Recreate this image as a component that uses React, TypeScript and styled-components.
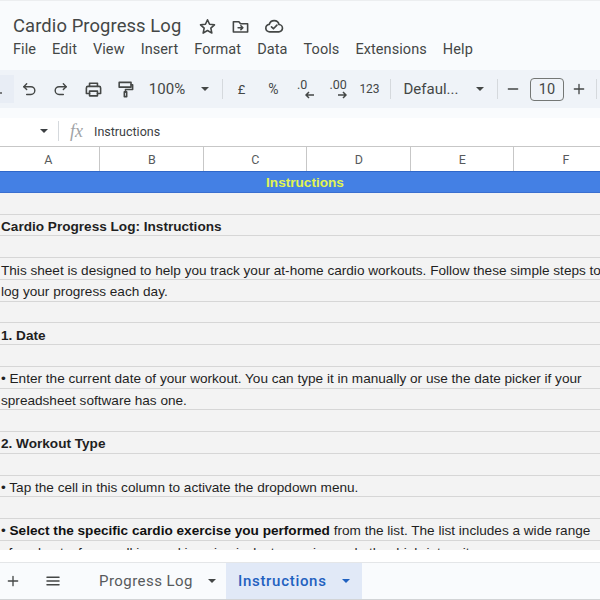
import { createGlobalStyle, styled } from "styled-components";
import type { ReactNode } from "react";

const Global = createGlobalStyle`
  html, body { margin: 0; padding: 0; background: #fff; }
  #root { width: 600px; height: 600px; overflow: hidden; }
`;

const Page = styled.div`
  width: 600px;
  height: 600px;
  display: flex;
  flex-direction: column;
  overflow: hidden;
  background: #f9fbfd;
  color: #444746;
  font-family: "Roboto", "Open Sans", sans-serif;
`;

const Header = styled.header`
  height: 70px;
  flex: none;
  box-sizing: border-box;
  border-top: 1px solid #eceef0;
  padding-left: 13px;
`;

const TitleRow = styled.div`
  height: 38px;
  display: flex;
  align-items: flex-end;
`;

const Title = styled.div`
  font-size: 18.4px;
  line-height: 26px;
  width: 185px;
  white-space: nowrap;
  letter-spacing: 0.1px;
`;

const TitleIcons = styled.div`
  display: flex;
  align-items: center;
  gap: 14px;
  height: 26px;
`;

const Menu = styled.nav`
  display: flex;
  gap: 16px;
  height: 20px;
  align-items: center;
  font-size: 14.5px;
  letter-spacing: 0.08px;
`;

const Toolbar = styled.div`
  height: 38px;
  margin-bottom: 10px;
  flex: none;
  background: #eff3f8;
  display: flex;
  align-items: center;
  position: relative;
`;

const SearchStub = styled.div`
  width: 14px;
  height: 28px;
  background: #e8edf5;
  flex: none;
  position: relative;
  &::after {
    content: "";
    position: absolute;
    left: 0;
    top: 17px;
    width: 2px;
    height: 2px;
    background: #555;
    border-radius: 1px;
  }
`;

const Tool = styled.div<{ $w: number; $size?: number }>`
  width: ${(p) => p.$w}px;
  flex: none;
  display: flex;
  align-items: center;
  justify-content: center;
  font-size: ${(p) => p.$size ?? 14}px;
  white-space: nowrap;
  color: #444746;
`;

const Divider = styled.div`
  width: 1px;
  height: 20px;
  background: #d5d9dd;
  flex: none;
`;

const Caret = styled.div<{ $color?: string }>`
  width: 0;
  height: 0;
  flex: none;
  border-left: 4px solid transparent;
  border-right: 4px solid transparent;
  border-top: 4px solid ${(p) => p.$color ?? "#444746"};
`;

const SizeBox = styled.div`
  width: 34px;
  height: 23px;
  box-sizing: border-box;
  border: 1px solid #747775;
  border-radius: 4px;
  flex: none;
  display: flex;
  align-items: center;
  justify-content: center;
  font-size: 14.5px;
`;

const DecimalIcon = styled.div`
  width: 17px;
  height: 20px;
  display: flex;
  flex-direction: column;
  align-items: flex-start;
  font-size: 12.5px;
  line-height: 12px;
  svg { align-self: flex-end; }
`;

const FormulaBar = styled.div`
  height: 29px;
  flex: none;
  background: #fff;
  display: flex;
  align-items: center;
  box-sizing: border-box;
  border-bottom: 1px solid #c7c7c7;
  padding-bottom: 2px;
  font-size: 12.5px;
  color: #3c4043;
`;

const NameBox = styled.div`
  width: 58px;
  display: flex;
  justify-content: flex-end;
  padding-right: 10px;
  box-sizing: border-box;
  flex: none;
`;

const Fx = styled.div`
  font-family: "Liberation Serif", serif;
  font-style: italic;
  font-size: 18px;
  color: #a0a3a6;
  width: 35px;
  padding-left: 11px;
  box-sizing: border-box;
  flex: none;
`;

const ColumnHeaders = styled.div`
  height: 24px;
  flex: none;
  background: #fff;
  display: flex;
  margin-left: -3.4px;
`;

const ColumnHead = styled.div`
  width: 103.5px;
  flex: none;
  box-sizing: border-box;
  border-right: 1px solid #c7c7c7;
  padding-left: 1px;
  display: flex;
  align-items: center;
  justify-content: center;
  font-size: 12.5px;
  color: #575a5c;
`;

const Grid = styled.div`
  height: 379px;
  flex: none;
  overflow: hidden;
  background: #f3f3f3;
`;

const Banner = styled.div`
  height: 22px;
  box-sizing: border-box;
  background: #4480e4;
  border-top: 1px solid #2f67c9;
  border-bottom: 1px solid #3a6fd0;
  padding-top: 1px;
  display: flex;
  align-items: center;
  justify-content: center;
  padding-left: 10px;
  font-family: "Liberation Sans", sans-serif;
  font-weight: 700;
  font-size: 13.6px;
  color: #e2f550;
`;

const Row = styled.div<{ $bold?: boolean }>`
  height: 21.74px;
  box-sizing: border-box;
  border-bottom: 1px solid #d6d6d6;
  padding: 3px 0 0 1px;
  display: flex;
  align-items: center;
  white-space: pre;
  font-family: "Liberation Sans", sans-serif;
  font-size: 13.6px;
  color: #1f1f1f;
  font-weight: ${(p) => (p.$bold ? 700 : 400)};
  b { font-weight: 700; color: #111; }
`;

const Gap = styled.div`
  height: 12px;
  flex: none;
  background: #fff;
`;

const TabBar = styled.div`
  height: 38px;
  flex: none;
  box-sizing: border-box;
  border-top: 1px solid #e4e6e8;
  border-bottom: 1px solid #d2d4d6;
  background: #f9fbfd;
  display: flex;
  align-items: stretch;
`;

const TabIcon = styled.div<{ $w: number }>`
  width: ${(p) => p.$w}px;
  flex: none;
  display: flex;
  align-items: center;
  justify-content: center;
`;

const SheetTab = styled.div<{ $active?: boolean }>`
  display: flex;
  align-items: center;
  flex: none;
  box-sizing: border-box;
  width: ${(p) => (p.$active ? 136 : 127)}px;
  padding-left: ${(p) => (p.$active ? 12 : 0)}px;
  gap: 15px;
  font-size: 15px;
  letter-spacing: ${(p) => (p.$active ? 0.7 : 0.45)}px;
  font-weight: ${(p) => (p.$active ? 500 : 400)};
  color: ${(p) => (p.$active ? "#1f61c0" : "#575a5c")};
  background: ${(p) => (p.$active ? "#e1e9f7" : "transparent")};
`;

const Icon = ({ size = 18, children }: { size?: number; children: ReactNode }) => (
  <svg width={size} height={size} viewBox="0 0 24 24" fill="none" stroke="#444746" strokeWidth="2" strokeLinecap="round" strokeLinejoin="round">
    {children}
  </svg>
);

const rows: { text?: ReactNode; bold?: boolean }[] = [
  {},
  { text: "Cardio Progress Log: Instructions", bold: true },
  {},
  { text: "This sheet is designed to help you track your at-home cardio workouts. Follow these simple steps to" },
  { text: "log your progress each day." },
  {},
  { text: "1. Date", bold: true },
  {},
  { text: "• Enter the current date of your workout. You can type it in manually or use the date picker if your" },
  { text: "spreadsheet software has one." },
  {},
  { text: "2. Workout Type", bold: true },
  {},
  { text: "• Tap the cell in this column to activate the dropdown menu." },
  {},
  { text: <>• <b>Select the specific cardio exercise you performed</b> from the list. The list includes a wide range</> },
  { text: "of workouts, from walking and jumping jacks to running and other high-intensity" },
];

export default function App() {
  return (
    <Page>
      <Global />
      <Header>
        <TitleRow>
          <Title>Cardio Progress Log</Title>
          <TitleIcons>
            <Icon size={19}>
              <polygon points="12,3.5 14.6,9.2 20.8,9.9 16.2,14.1 17.5,20.3 12,17.1 6.5,20.3 7.8,14.1 3.2,9.9 9.4,9.2" />
            </Icon>
            <Icon size={19}>
              <path d="M3 6h7l2 2.5h9V19H3z" />
              <path d="M9 13.5h6M12.5 11l2.5 2.5-2.5 2.5" />
            </Icon>
            <Icon size={20}>
              <path d="M7 19a4.5 4.5 0 0 1-.6-9A6 6 0 0 1 18 10.2 4.4 4.4 0 0 1 17.5 19z" />
              <path d="M9 13l2.3 2.3L15.5 11" />
            </Icon>
          </TitleIcons>
        </TitleRow>
        <Menu>
          <span>File</span>
          <span>Edit</span>
          <span>View</span>
          <span>Insert</span>
          <span>Format</span>
          <span>Data</span>
          <span>Tools</span>
          <span>Extensions</span>
          <span>Help</span>
        </Menu>
      </Header>
      <Toolbar>
        <SearchStub />
        <Tool $w={30}>
          <Icon size={17}>
            <path d="M8 4L4 8l4 4" />
            <path d="M4 8h10a5 5 0 0 1 0 11H8" />
          </Icon>
        </Tool>
        <Tool $w={33}>
          <Icon size={17}>
            <path d="M16 4l4 4-4 4" />
            <path d="M20 8H10a5 5 0 0 0 0 11h6" />
          </Icon>
        </Tool>
        <Tool $w={33}>
          <Icon size={19}>
            <path d="M7 8V4h10v4" />
            <path d="M7 17H3v-7a2 2 0 0 1 2-2h14a2 2 0 0 1 2 2v7h-4" />
            <path d="M7 14h10v6H7z" />
          </Icon>
        </Tool>
        <Tool $w={30}>
          <Icon size={19}>
            <path d="M4 3h15v6H4z" />
            <path d="M19 6h2v6h-9v3" />
            <path d="M10.5 15h3v6h-3z" />
          </Icon>
        </Tool>
        <Tool $w={54} $size={15}>100%</Tool>
        <Tool $w={22}><Caret /></Tool>
        <Tool $w={6} />
        <Divider />
        <Tool $w={37} $size={13}>£</Tool>
        <Tool $w={27} $size={14}>%</Tool>
        <Tool $w={37}>
          <DecimalIcon>
            <span>.0</span>
            <svg width="9" height="8" viewBox="0 0 9 8" fill="none" stroke="#444746" strokeWidth="1.5"><path d="M9 4H1M4 1L1 4l3 3" /></svg>
          </DecimalIcon>
        </Tool>
        <Tool $w={28}>
          <DecimalIcon>
            <span>.00</span>
            <svg width="9" height="8" viewBox="0 0 9 8" fill="none" stroke="#444746" strokeWidth="1.5"><path d="M0 4h8M5 1l3 3-3 3" /></svg>
          </DecimalIcon>
        </Tool>
        <Tool $w={35} $size={12}>123</Tool>
        <Tool $w={3} />
        <Divider />
        <Tool $w={80} $size={15}>Defaul...</Tool>
        <Tool $w={18}><Caret /></Tool>
        <Tool $w={8} />
        <Divider />
        <Tool $w={30}>
          <Icon size={16}><path d="M5 12h14" /></Icon>
        </Tool>
        <Tool $w={2} />
        <SizeBox>10</SizeBox>
        <Tool $w={29}>
          <Icon size={16}><path d="M5 12h14M12 5v14" /></Icon>
        </Tool>
        <Tool $w={3} />
        <Divider />
      </Toolbar>
      <FormulaBar>
        <NameBox><Caret $color="#3c4043" /></NameBox>
        <Divider />
        <Fx>fx</Fx>
        <span>Instructions</span>
      </FormulaBar>
      <ColumnHeaders>
        {["A", "B", "C", "D", "E", "F"].map((c) => (
          <ColumnHead key={c}>{c}</ColumnHead>
        ))}
      </ColumnHeaders>
      <Grid>
        <Banner>Instructions</Banner>
        {rows.map((r, i) => (
          <Row key={i} $bold={r.bold}>{r.text}</Row>
        ))}
      </Grid>
      <Gap />
      <TabBar>
        <TabIcon $w={26}>
          <Icon size={16}><path d="M5 12h14M12 5v14" /></Icon>
        </TabIcon>
        <TabIcon $w={53}>
          <Icon size={18}><path d="M4 7h16M4 12h16M4 17h16" /></Icon>
        </TabIcon>
        <TabIcon $w={20} />
        <SheetTab>
          <span>Progress Log</span>
          <Caret />
        </SheetTab>
        <SheetTab $active>
          <span>Instructions</span>
          <Caret $color="#1f61c0" />
        </SheetTab>
      </TabBar>
    </Page>
  );
}
